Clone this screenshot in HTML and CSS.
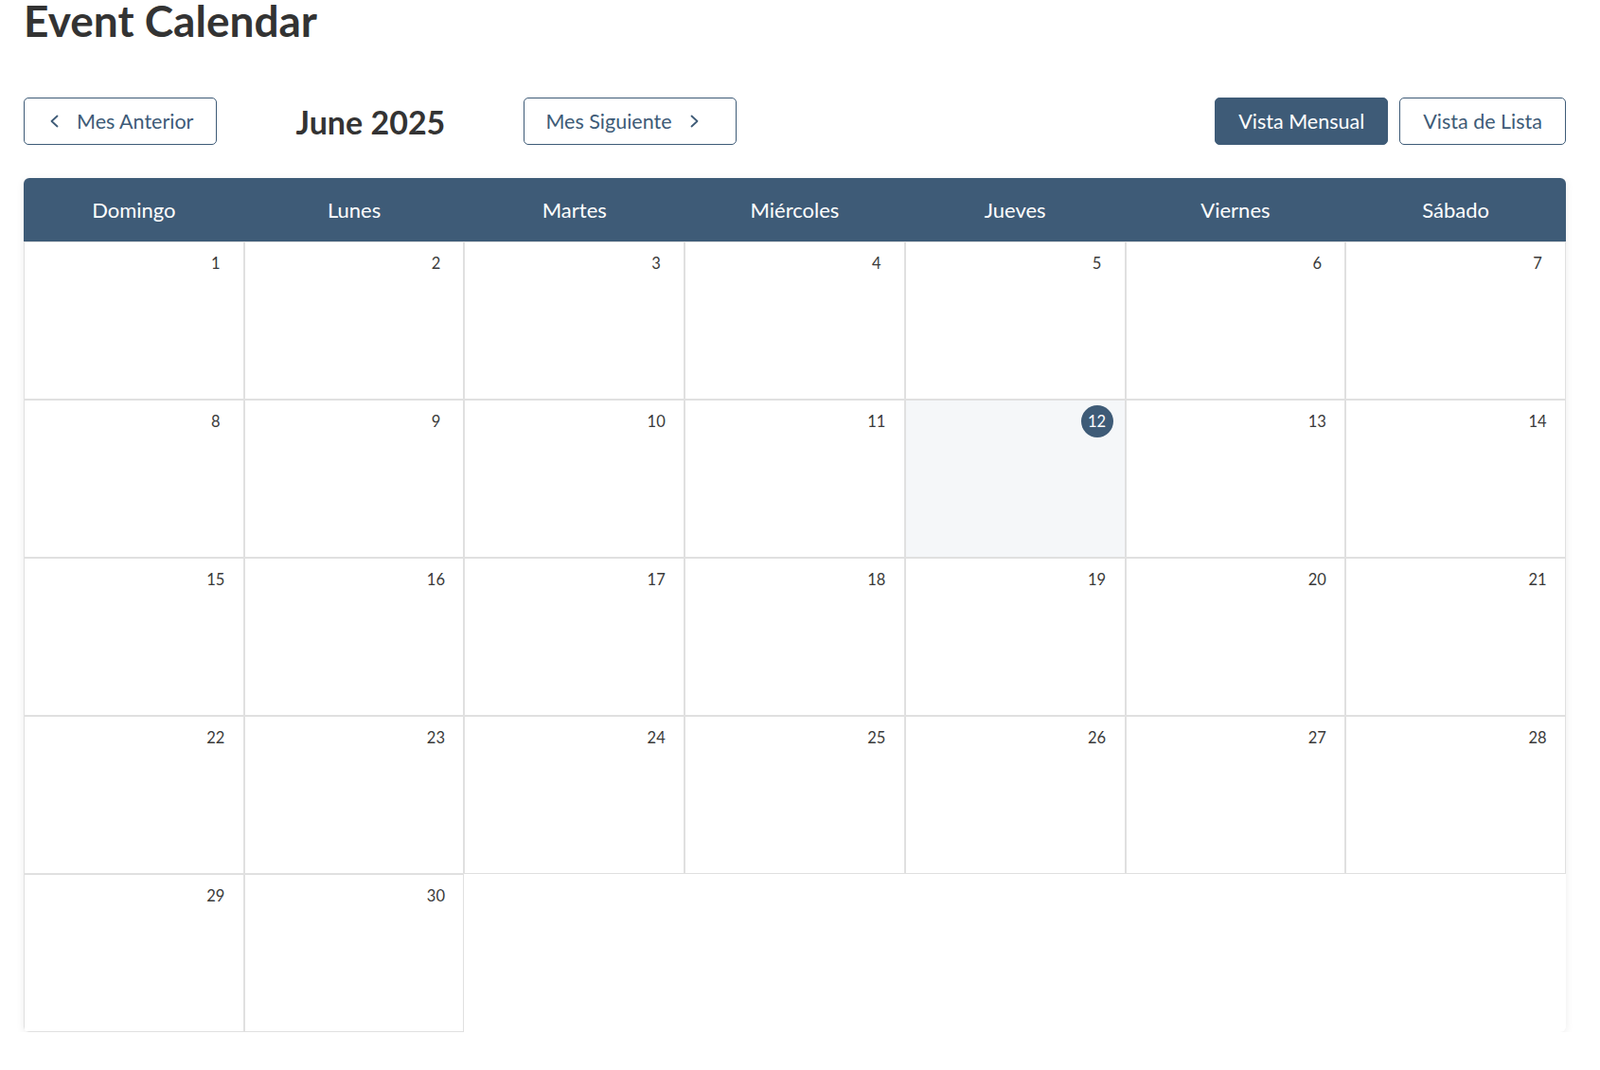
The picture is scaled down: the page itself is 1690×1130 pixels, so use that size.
FILE: index.html
```html
<!DOCTYPE html>
<html lang="es">
<head>
    <meta charset="UTF-8">
    <meta name="viewport" content="width=device-width, initial-scale=1.0">
    <title>Event Calendar</title>
    <link rel="stylesheet" href="styles.css">
</head>
<body>

    <div class="page">
        <h1 class="page-title">Event Calendar</h1>

        <!-- Navegación -->
        <div class="toolbar">
            <div class="month-nav">
                <button class="btn nav-btn prev">
                    <svg width="16" height="16" viewBox="0 0 16 16"><path d="M10.5 2.5 4.5 8l6 5.5" fill="none" stroke="currentColor" stroke-width="1.8" stroke-linecap="round" stroke-linejoin="round"/></svg>
                    <span>Mes Anterior</span>
                </button>
                <h2 class="month-label">June 2025</h2>
                <button class="btn nav-btn next">
                    <span>Mes Siguiente</span>
                    <svg width="16" height="16" viewBox="0 0 16 16"><path d="M5.5 2.5 11.5 8l-6 5.5" fill="none" stroke="currentColor" stroke-width="1.8" stroke-linecap="round" stroke-linejoin="round"/></svg>
                </button>
            </div>
            <div class="view-switch">
                <button class="btn btn-active">Vista Mensual</button>
                <button class="btn">Vista de Lista</button>
            </div>
        </div>

        <!-- Calendario -->
        <div class="calendar">
            <div class="weekdays">
                <div>Domingo</div>
                <div>Lunes</div>
                <div>Martes</div>
                <div>Miércoles</div>
                <div>Jueves</div>
                <div>Viernes</div>
                <div>Sábado</div>
            </div>
            <div id="days" class="days"></div>
        </div>
    </div>

    <script>
    // Dibujar los días de junio 2025
    function renderDays() {
        const days = document.getElementById("days");
        const firstWeekday = new Date(2025, 5, 1).getDay();
        const total = 30;
        const today = 12;

        for (let i = 0; i < firstWeekday; i++) {
            days.appendChild(document.createElement("div"));
        }

        for (let d = 1; d <= total; d++) {
            const cell = document.createElement("div");
            cell.className = d === today ? "day today" : "day";
            cell.innerHTML = `<span class="day-number">${d}</span>`;
            days.appendChild(cell);
        }
    }

    document.addEventListener("DOMContentLoaded", renderDays);
    </script>

</body>
</html>
```

FILE: styles.css
```css
body {
    font-family: Lato, "Noto Sans", sans-serif;
    background-color: #fff;
    color: #333;
    margin: 0;
}
.page {
    max-width: 1629px;
    padding: 0 25px;
}
.page-title {
    font-size: 46px;
    font-weight: 700;
    line-height: 0.965;
    margin: 0;
    color: #333;
}
.toolbar {
    display: flex;
    justify-content: space-between;
    align-items: center;
    margin-top: 59px;
}
.month-nav,
.view-switch {
    display: flex;
    align-items: center;
}
.view-switch {
    gap: 12px;
}
.view-switch .btn {
    padding: 0 24px;
}
.month-label {
    width: 324px;
    margin: 0;
    text-align: center;
    font-size: 34px;
    font-weight: 700;
    color: #333;
}
.btn {
    height: 50px;
    padding: 0 22px;
    background-color: #fff;
    color: #3e5b77;
    border: 1px solid #3e5b77;
    border-radius: 5px;
    font-family: inherit;
    font-size: 21.5px;
    cursor: pointer;
}
.btn:hover {
    background-color: #f3f6f9;
}
.btn-active {
    background-color: #3e5b77;
    color: #fff;
}
.btn-active:hover {
    background-color: #35506a;
}
.nav-btn {
    display: flex;
    align-items: center;
    gap: 15px;
}
.nav-btn.prev {
    padding: 0 24px;
}
.nav-btn.next {
    padding: 0 36px 0 22px;
}
.calendar {
    margin-top: 35px;
    border-radius: 6px;
    overflow: hidden;
    box-shadow: 0 2px 8px rgba(0, 0, 0, 0.08);
}
.weekdays {
    display: grid;
    grid-template-columns: repeat(7, 1fr);
    background-color: #3e5b77;
    color: #fff;
}
.weekdays div {
    height: 67px;
    line-height: 67px;
    text-align: center;
    font-size: 22px;
}
.days {
    display: grid;
    grid-template-columns: repeat(7, 1fr);
    grid-auto-rows: 167px;
}
.day {
    display: flex;
    justify-content: flex-end;
    align-items: flex-start;
    padding: 5px 12px;
    border: 1px solid #e0e0e0;
    box-sizing: border-box;
}
.day-number {
    width: 34px;
    height: 34px;
    line-height: 34px;
    text-align: center;
    border-radius: 50%;
    font-size: 16.5px;
    color: #3a3a3a;
}
.today {
    background-color: #f5f7f9;
}
.today .day-number {
    background-color: #3e5b77;
    color: #fff;
}
```
